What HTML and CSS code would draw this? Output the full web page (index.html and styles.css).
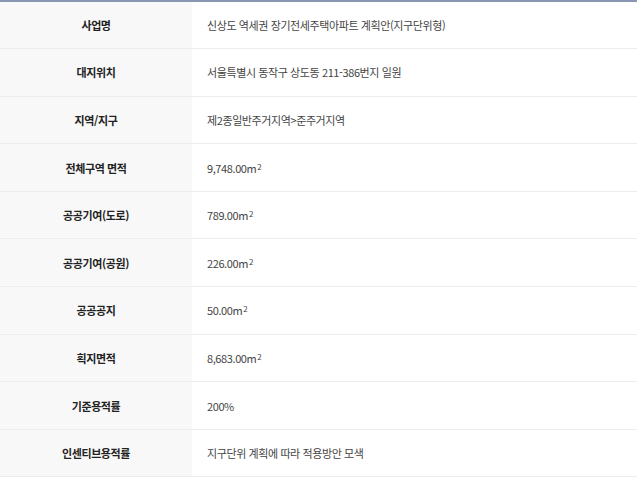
FILE: index.html
```html
<!DOCTYPE html>
<html lang="ko">

<head>
    <meta charset="UTF-8">
    <meta name="viewport" content="width=device-width, initial-scale=1.0">
    <title>신상도 역세권 장기전세주택아파트 계획안</title>
    <link rel="stylesheet" href="styles.css">
</head>

<body>
    <table class="info-table">
        <tbody>
            <tr>
                <th>사업명</th>
                <td>신상도 역세권 장기전세주택아파트 계획안(지구단위형)</td>
            </tr>
            <tr>
                <th>대지위치</th>
                <td>서울특별시 동작구 상도동 211-386번지 일원</td>
            </tr>
            <tr>
                <th>지역/지구</th>
                <td>제2종일반주거지역&gt;준주거지역</td>
            </tr>
            <tr>
                <th>전체구역 면적</th>
                <td>9,748.00m<sup>2</sup></td>
            </tr>
            <tr>
                <th>공공기여(도로)</th>
                <td>789.00m<sup>2</sup></td>
            </tr>
            <tr>
                <th>공공기여(공원)</th>
                <td>226.00m<sup>2</sup></td>
            </tr>
            <tr>
                <th>공공공지</th>
                <td>50.00m<sup>2</sup></td>
            </tr>
            <tr>
                <th>획지면적</th>
                <td>8,683.00m<sup>2</sup></td>
            </tr>
            <tr>
                <th>기준용적률</th>
                <td>200%</td>
            </tr>
            <tr>
                <th>인센티브용적률</th>
                <td>지구단위 계획에 따라 적용방안 모색</td>
            </tr>
        </tbody>
    </table>
</body>

</html>
```

FILE: styles.css
```css
body {
    margin: 0;
    padding: 0;
    background-color: #fff;
    font-family: "Noto Sans CJK KR", "Noto Sans", sans-serif;
}

.info-table {
    width: 637px;
    border-collapse: collapse;
    border-top: 2px solid #8a97b2;
    font-size: 11px;
    letter-spacing: -0.4px;
}

.info-table th,
.info-table td {
    height: 47.6px;
    padding: 0;
    border-bottom: 1px solid #ececec;
    box-sizing: border-box;
}

.info-table th {
    width: 192px;
    background-color: #f8f8f8;
    color: #222;
    font-weight: 600;
    text-align: center;
}

.info-table td {
    padding-left: 15px;
    color: #444;
    font-weight: 400;
    text-align: left;
}

.info-table sup {
    font-size: 8px;
    line-height: 0;
    vertical-align: 3px;
    margin-left: 1px;
}
```
